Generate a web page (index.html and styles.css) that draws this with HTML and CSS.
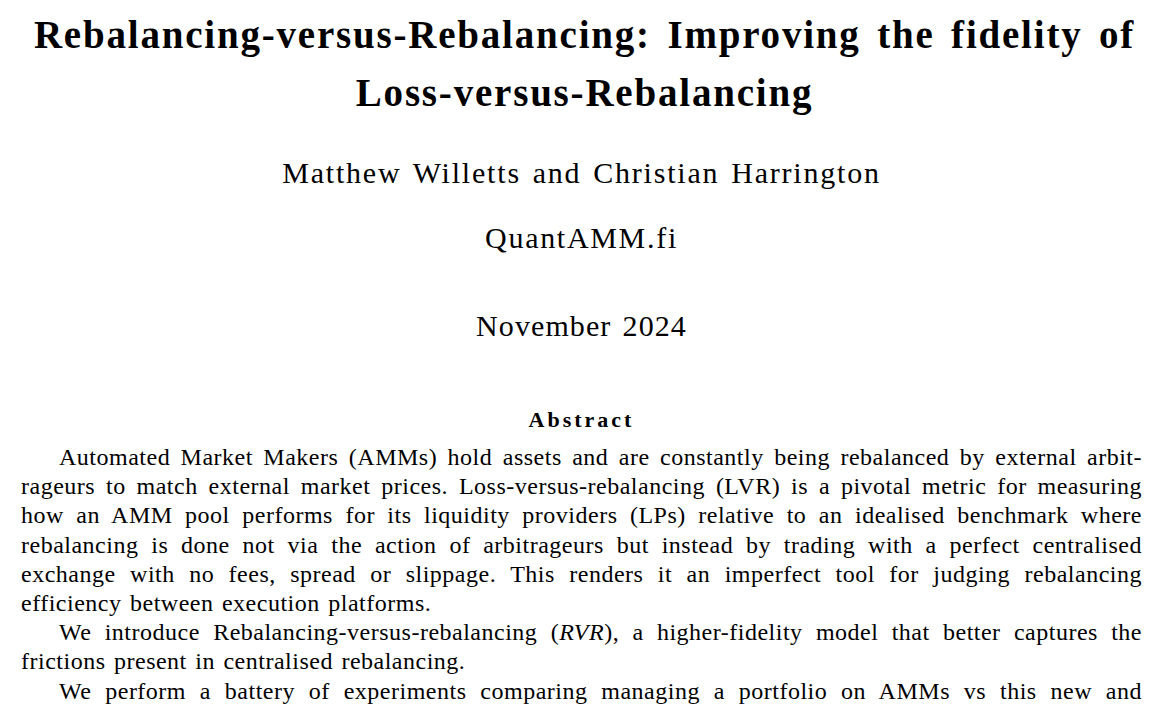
FILE: index.html
```html
<!DOCTYPE html>
<html lang="en">
<head>
<meta charset="utf-8">
<title>Rebalancing-versus-Rebalancing</title>
<link rel="stylesheet" href="styles.css">
</head>
<body>
<main class="paper">
  <header class="titleblock">
    <h1 class="title">
      <span class="tline">Rebalancing-versus-Rebalancing: Improving the fidelity of</span>
      <span class="tline">Loss-versus-Rebalancing</span>
    </h1>
    <p class="authors">Matthew Willetts and Christian Harrington</p>
    <p class="affil">QuantAMM.fi</p>
    <p class="date">November 2024</p>
  </header>
  <section class="abstract">
    <h2 class="abs-head">Abstract</h2>
    <p class="para">
      <span class="ln first">Automated Market Makers (AMMs) hold assets and are constantly being rebalanced by external arbit-</span>
      <span class="ln">rageurs to match external market prices. Loss-versus-rebalancing (LVR) is a pivotal metric for measuring</span>
      <span class="ln">how an AMM pool performs for its liquidity providers (LPs) relative to an idealised benchmark where</span>
      <span class="ln">rebalancing is done not via the action of arbitrageurs but instead by trading with a perfect centralised</span>
      <span class="ln">exchange with no fees, spread or slippage. This renders it an imperfect tool for judging rebalancing</span>
      <span class="ln last">efficiency between execution platforms.</span>
    </p>
    <p class="para">
      <span class="ln first">We introduce Rebalancing-versus-rebalancing (<i class="math">RVR</i>), a higher-fidelity model that better captures the</span>
      <span class="ln last">frictions present in centralised rebalancing.</span>
    </p>
    <p class="para">
      <span class="ln first">We perform a battery of experiments comparing managing a portfolio on AMMs vs this new and</span>
    </p>
  </section>
</main>
</body>
</html>
```

FILE: styles.css
```css
html, body {
  margin: 0;
  padding: 0;
  background: #ffffff;
}

body {
  color: #000000;
  font-family: "Liberation Serif", "Times New Roman", serif;
  overflow: hidden;
}

.paper {
  width: 1121px;
  padding: 0 26px 0 21px;
}

.titleblock {
  text-align: center;
}

.title {
  margin: 6px 0 0 0;
  padding-left: 6px;
  font-size: 39px;
  line-height: 58px;
  font-weight: bold;
  letter-spacing: 1.8px;
  word-spacing: 5px;
}

.tline {
  display: block;
}

.authors,
.affil,
.date {
  margin: 0;
  font-size: 30px;
  line-height: 36px;
  word-spacing: 2.5px;
}

.authors {
  margin-top: 33px;
  letter-spacing: 1.8px;
}

.affil {
  margin-top: 29px;
  letter-spacing: 1.7px;
}

.date {
  margin-top: 52px;
  letter-spacing: 1.1px;
}

.abs-head {
  margin: 62px 0 0 0;
  text-align: center;
  font-size: 22px;
  line-height: 28px;
  font-weight: bold;
  letter-spacing: 3px;
}

.abstract .para {
  margin: 0;
  font-size: 24px;
  line-height: 29.2px;
  letter-spacing: 0.5px;
  word-spacing: 2px;
}

.abs-head + .para {
  margin-top: 9px;
}

.ln {
  display: block;
  text-align: justify;
  text-align-last: justify;
  white-space: nowrap;
}

.ln.first {
  padding-left: 38px;
}

.ln.last {
  text-align-last: left;
}

.math {
  font-style: italic;
}
```
